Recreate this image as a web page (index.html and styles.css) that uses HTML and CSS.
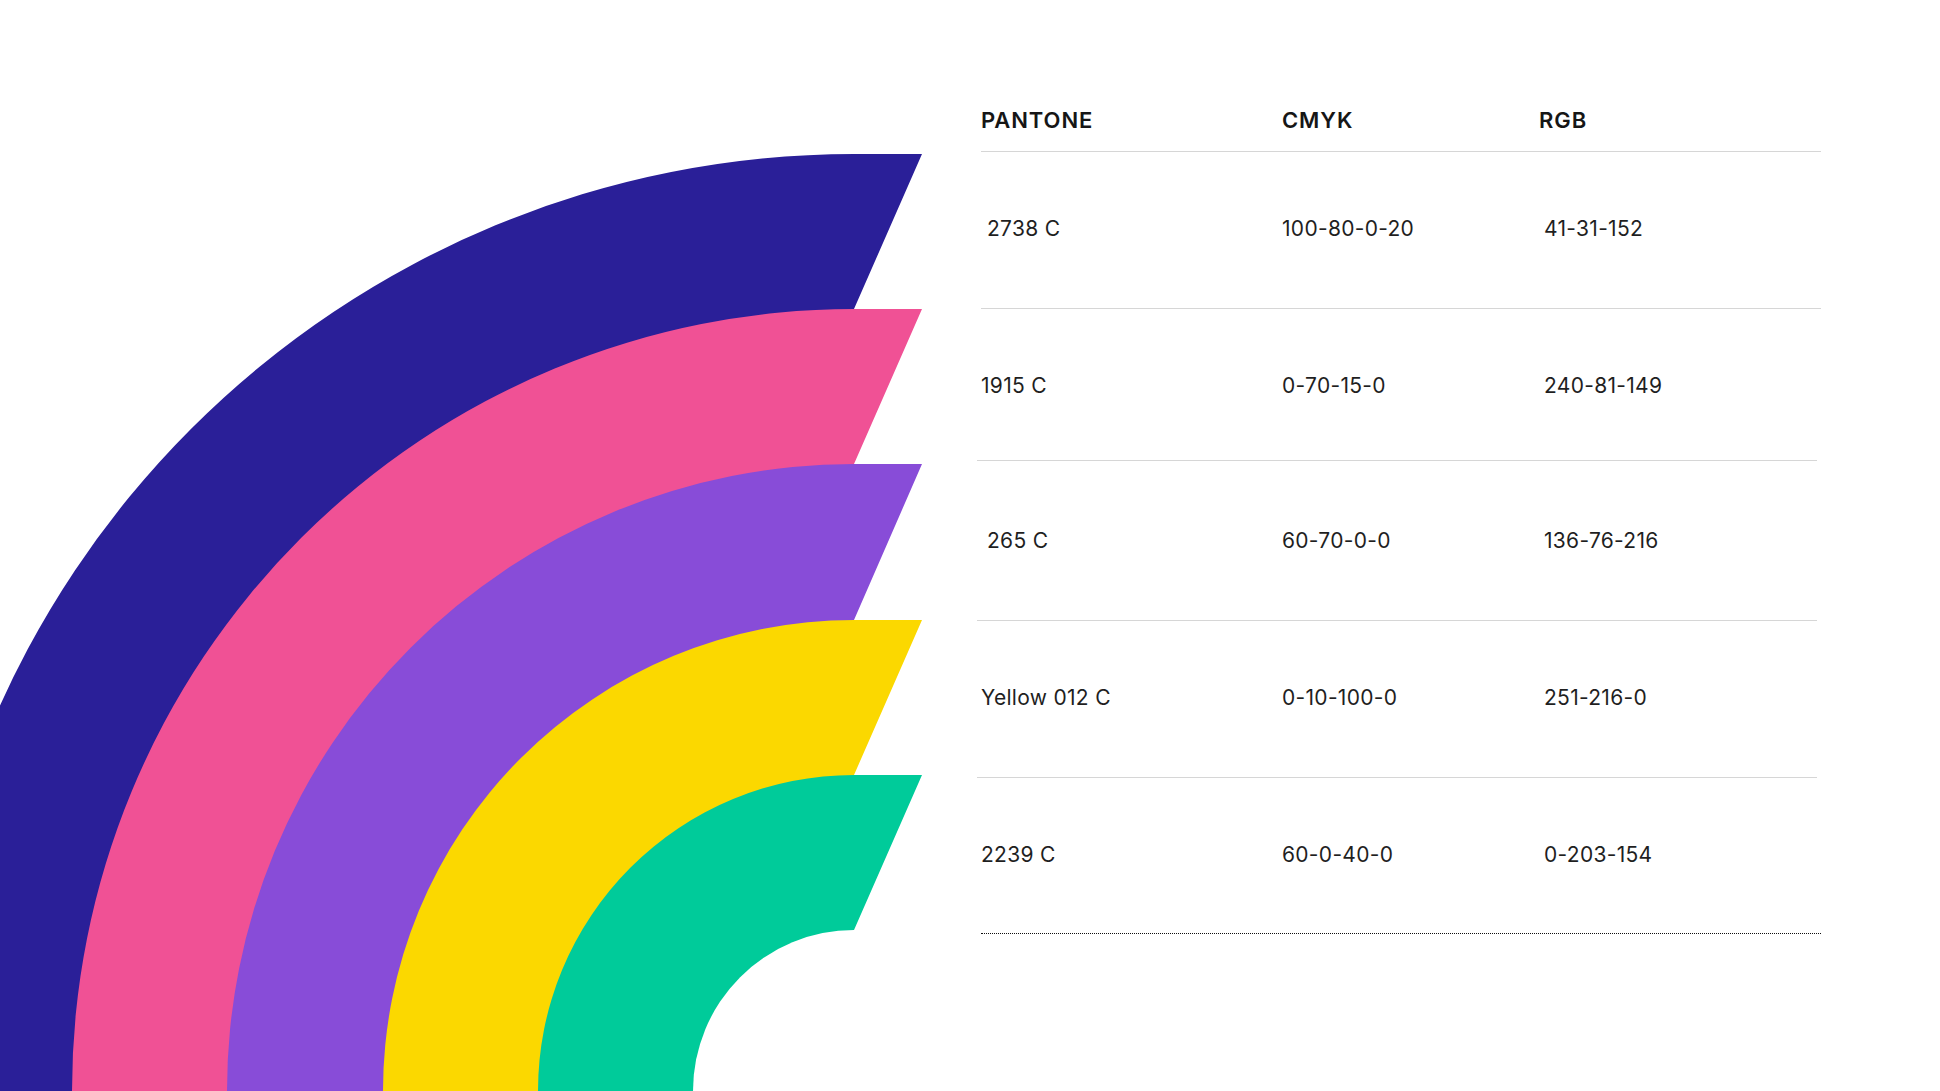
FILE: index.html
```html
<!DOCTYPE html>
<html lang="en">
<head>
<meta charset="utf-8">
<title>Brand colours</title>
<link rel="stylesheet" href="styles.css">
</head>
<body>
<main class="page">
  <div class="art" aria-hidden="true">
    <svg class="rainbow" width="940" height="1091" viewBox="0 0 940 1091">
      <path fill="#2A1F98" d="M -83 1091 A 937 937 0 0 1 854 154 L 922 154 L 854 309 L 854 1091 Z"/>
      <path fill="#F05195" d="M 72 1091 A 782 782 0 0 1 854 309 L 922 309 L 854 464 L 854 1091 Z"/>
      <path fill="#884CD8" d="M 227 1091 A 627 627 0 0 1 854 464 L 922 464 L 854 620 L 854 1091 Z"/>
      <path fill="#FBD800" d="M 383 1091 A 471 471 0 0 1 854 620 L 922 620 L 854 775 L 854 1091 Z"/>
      <path fill="#00CB9A" d="M 538 1091 A 316 316 0 0 1 854 775 L 922 775 L 854 930 L 854 1091 Z"/>
      <path fill="#FFFFFF" d="M 693 1091 A 161 161 0 0 1 854 930 L 854 1091 Z"/>
    </svg>
  </div>

  <section class="palette">
    <div class="row head">
      <div class="cell">PANTONE</div>
      <div class="cell">CMYK</div>
      <div class="cell">RGB</div>
    </div>
    <div class="row r1">
      <div class="cell ind">2738 C</div>
      <div class="cell">100-80-0-20</div>
      <div class="cell val">41-31-152</div>
    </div>
    <div class="row r2 offset">
      <div class="cell">1915 C</div>
      <div class="cell">0-70-15-0</div>
      <div class="cell val">240-81-149</div>
    </div>
    <div class="row r3 offset">
      <div class="cell ind">265 C</div>
      <div class="cell">60-70-0-0</div>
      <div class="cell val">136-76-216</div>
    </div>
    <div class="row r4 offset">
      <div class="cell">Yellow 012 C</div>
      <div class="cell">0-10-100-0</div>
      <div class="cell val">251-216-0</div>
    </div>
    <div class="row r5 last">
      <div class="cell">2239 C</div>
      <div class="cell">60-0-40-0</div>
      <div class="cell val">0-203-154</div>
    </div>
  </section>
</main>
</body>
</html>
```

FILE: styles.css
```css
html, body {
  margin: 0;
  padding: 0;
  background: #ffffff;
}

.page {
  display: flex;
  width: 1940px;
  height: 1091px;
  overflow: hidden;
  font-family: "Inter", "Open Sans", sans-serif;
  color: #1f1f1f;
}

.art {
  flex: 0 0 981px;
  height: 1091px;
}

.rainbow {
  display: block;
}

.palette {
  flex: 0 0 840px;
  padding-top: 86px;
  box-sizing: border-box;
}

.row {
  display: grid;
  grid-template-columns: 301px 257px 1fr;
  align-items: center;
  box-sizing: border-box;
  border-bottom: 1px solid #d6d6d6;
  font-size: 21px;
  font-weight: 400;
  letter-spacing: 0.3px;
}

.row.head {
  height: 66px;
  padding-top: 2px;
  font-weight: 600;
  font-size: 22px;
  letter-spacing: 0.9px;
  color: #161616;
}

.row.offset {
  margin-left: -4px;
  margin-right: 4px;
  padding-left: 4px;
}

.r1 { height: 157px; padding-bottom: 4px; }
.r2 { height: 152px; padding-top: 2px; }
.r3 { height: 160px; }
.r4 { height: 157px; padding-bottom: 4px; }
.r5 { height: 156px; padding-bottom: 2px; }

.row.last {
  border-bottom: 1px dotted #111111;
}

.cell {
  white-space: nowrap;
  line-height: 1;
}

.cell.ind {
  padding-left: 6px;
}

.cell.val {
  padding-left: 5px;
}
```
